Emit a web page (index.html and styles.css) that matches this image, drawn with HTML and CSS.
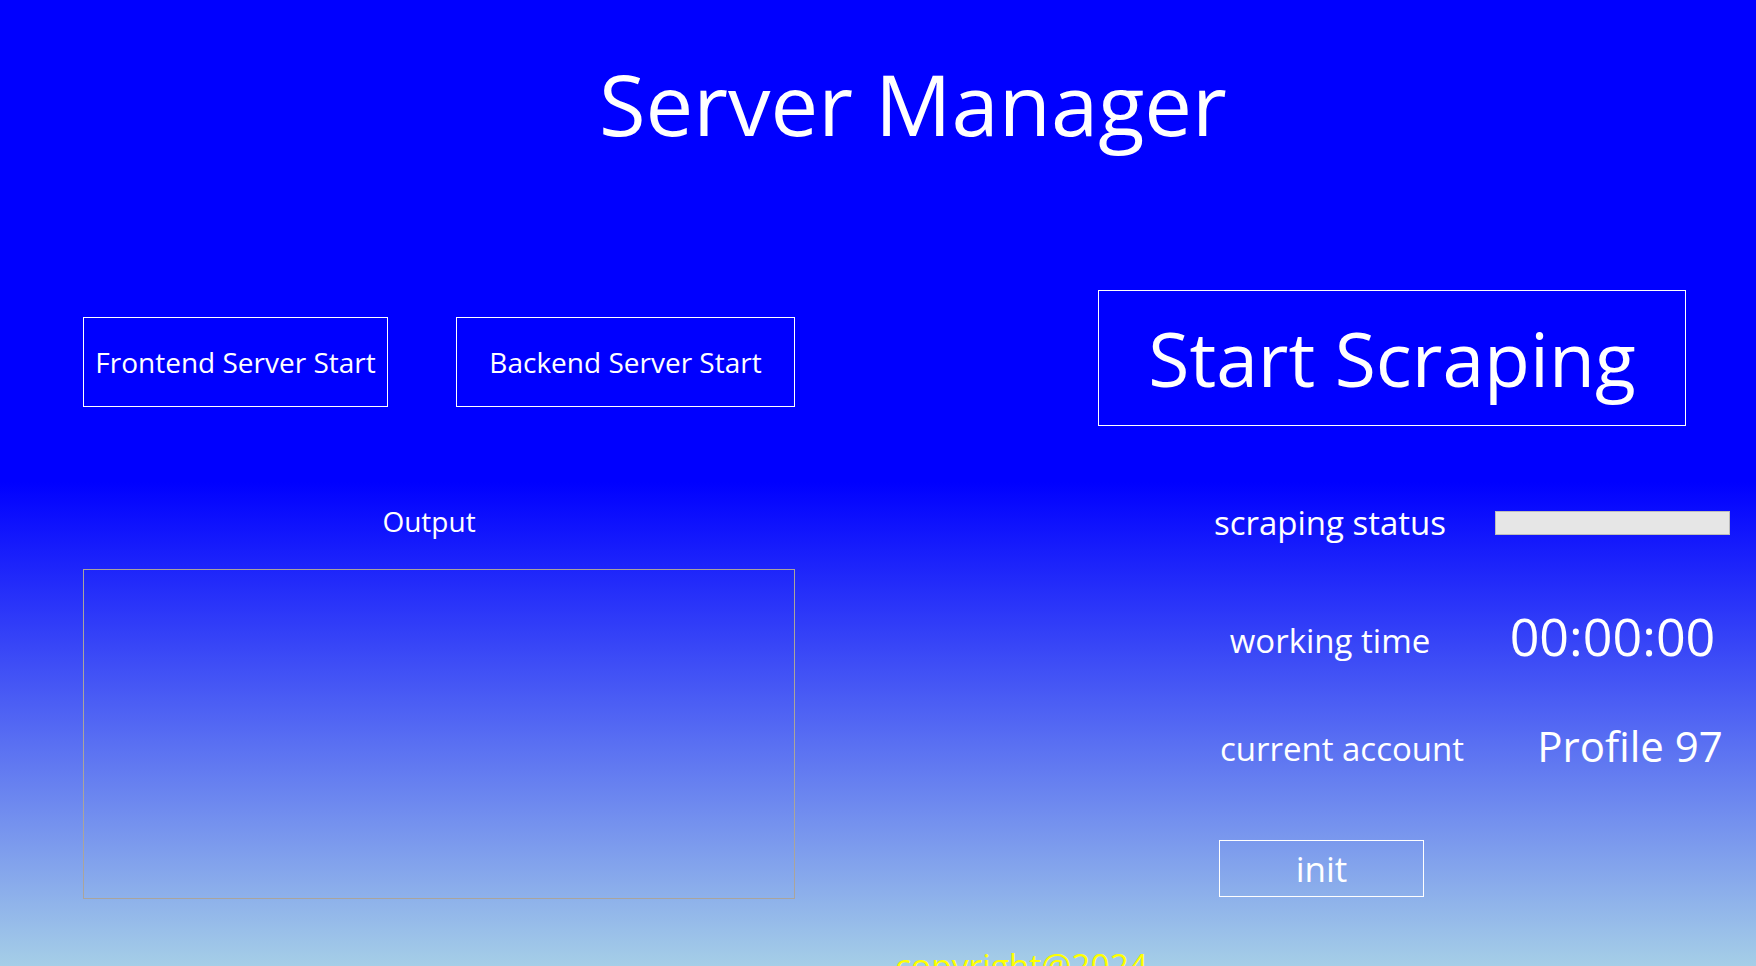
FILE: index.html
```html
<!DOCTYPE html>
<html lang="en">
<head>
<meta charset="utf-8">
<title>Server Manager</title>
<link rel="stylesheet" href="styles.css">
</head>
<body>
<div class="window">
  <h1 class="title">Server Manager</h1>
  <div class="main">
    <section class="left">
      <div class="server-buttons">
        <button class="btn btn-frontend">Frontend Server Start</button>
        <button class="btn btn-backend">Backend Server Start</button>
      </div>
      <div class="output-label">Output</div>
      <div class="output-box"></div>
    </section>
    <section class="right">
      <button class="btn btn-scrape">Start Scraping</button>
      <div class="status-grid">
        <div class="label">scraping status</div>
        <div class="value"><div class="progress"></div></div>
        <div class="label label-time">working time</div>
        <div class="value value-time">00:00:00</div>
        <div class="label label-account">current account</div>
        <div class="value value-account">Profile 97</div>
      </div>
      <div class="init-row">
        <button class="btn btn-init">init</button>
      </div>
    </section>
  </div>
  <footer class="footer">copyright@2024</footer>
</div>
</body>
</html>
```
FILE: styles.css
```css
html, body {
  margin: 0;
  padding: 0;
}
body {
  width: 1756px;
  height: 966px;
  overflow: hidden;
  background: linear-gradient(to bottom, #0000ff 0px, #0000ff 482px, #add8e6 989px);
  color: #ffffff;
  font-family: "Open Sans", "Noto Sans", sans-serif;
}
.window {
  display: flex;
  flex-direction: column;
  height: 966px;
}
.title {
  margin: 43px 0 0 599px;
  font-weight: 400;
  font-size: 85px;
  line-height: 120px;
  white-space: nowrap;
}
.main {
  display: flex;
  margin-top: 127px;
}
.btn {
  background: transparent;
  color: #ffffff;
  border: 1px solid #ffffff;
  font-family: inherit;
  font-weight: 400;
  padding: 0;
  margin: 0;
  cursor: pointer;
}
.left {
  margin-left: 83px;
  width: 712px;
  padding-top: 27px;
  display: flex;
  flex-direction: column;
}
.server-buttons {
  display: flex;
  gap: 68px;
}
.btn-frontend {
  width: 305px;
  height: 90px;
  font-size: 28px;
}
.btn-backend {
  width: 339px;
  height: 90px;
  font-size: 28px;
}
.output-label {
  margin-top: 94px;
  text-align: center;
  font-size: 28px;
  line-height: 40px;
  padding-right: 20px;
}
.output-box {
  margin-top: 28px;
  height: 328px;
  border: 1px solid #aaa49c;
}
.right {
  margin-left: 303px;
  width: 640px;
  display: flex;
  flex-direction: column;
}
.btn-scrape {
  width: 588px;
  height: 136px;
  font-size: 75px;
}
.status-grid {
  display: grid;
  grid-template-columns: 382px 235px;
  column-gap: 15px;
  grid-template-rows: 60px 176px 40px;
  margin-top: 62px;
  align-items: center;
}
.label {
  text-align: center;
  font-size: 33px;
  line-height: 40px;
  padding-left: 82px;
  padding-top: 9px;
  white-space: nowrap;
}
.label-account {
  padding-left: 106px;
}
.value {
  text-align: center;
  white-space: nowrap;
}
.progress {
  height: 22px;
  margin-top: 10px;
  background: #e6e6e6;
  border: 1px solid #bcbcbc;
}
.value-time {
  font-size: 52px;
  line-height: 70px;
}
.value-account {
  font-size: 42px;
  line-height: 56px;
  padding-left: 35px;
  padding-top: 4px;
}
.init-row {
  padding-left: 121px;
  margin-top: 76px;
}
.btn-init {
  width: 205px;
  height: 57px;
  font-size: 35px;
}
.footer {
  margin: 46px 0 0 895px;
  color: #ffff00;
  font-size: 33.5px;
  line-height: 40px;
  white-space: nowrap;
}
```
